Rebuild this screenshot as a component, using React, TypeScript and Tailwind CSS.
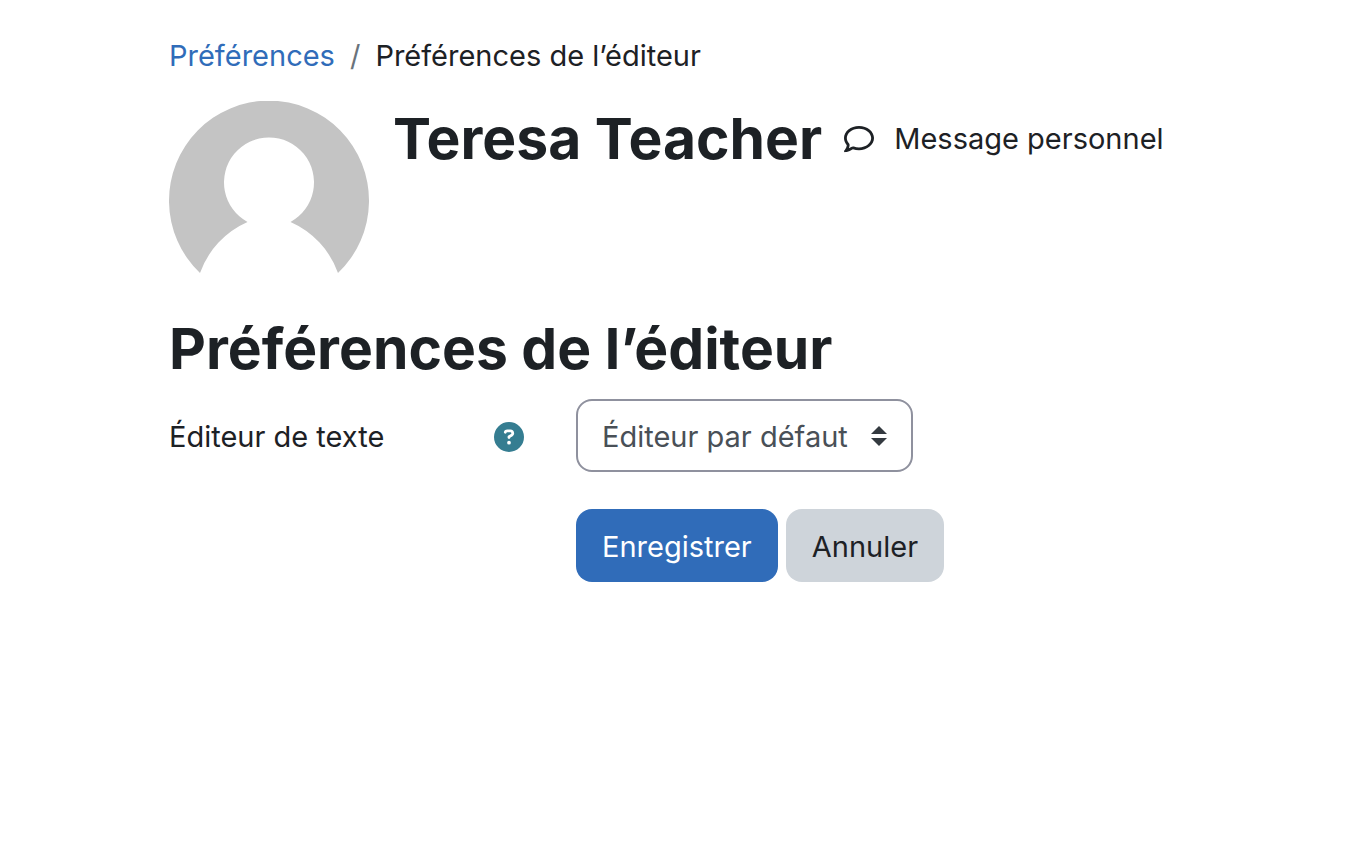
import { FaCircleQuestion, FaRegComment } from 'react-icons/fa6'

function Avatar() {
  return (
    <svg viewBox="0 0 200 200" className="size-50 shrink-0" role="img" aria-label="Teresa Teacher">
      <path
        d="M31 172A100 100 0 1 1 169 172A88 88 0 0 0 121.5 121A45 45 0 1 0 78.5 121A88 88 0 0 0 31 172Z"
        fill="#c4c4c4"
      />
    </svg>
  )
}

export default function App() {
  return (
    <main className="min-h-screen bg-white px-[169px] pt-9 font-['Inter',sans-serif] text-[29px] leading-10 text-[#1d2125]">
      <nav aria-label="Fil d’Ariane">
        <ol className="flex gap-[15px]">
          <li>
            <a href="#preferences" className="text-[#306cb9]">Préférences</a>
          </li>
          <li aria-hidden="true" className="text-[#6a737b]">/</li>
          <li aria-current="page">Préférences de l’éditeur</li>
        </ol>
      </nav>

      <header className="mt-[25px] flex gap-6">
        <Avatar />
        <div className="flex h-[76px] items-center gap-[22px]">
          <h1 className="text-[57px] leading-[72px] font-bold whitespace-nowrap">Teresa Teacher</h1>
          <a href="#message" className="flex items-center gap-5 whitespace-nowrap">
            <FaRegComment className="size-[30px]" />
            Message personnel
          </a>
        </div>
      </header>

      <h2 className="mt-3 text-[57px] leading-[72px] font-bold">Préférences de l’éditeur</h2>

      <form className="mt-[14px] grid grid-cols-[355px_1fr] gap-x-[52px] gap-y-[37px]">
        <div className="flex items-center justify-between pt-0.5">
          <label htmlFor="editor">Éditeur de texte</label>
          <button type="button" aria-label="Aide" className="text-[#357d91]">
            <FaCircleQuestion className="size-[30px]" />
          </button>
        </div>
        <div className="relative w-fit">
          <select
            id="editor"
            className="block h-[73px] w-[337px] appearance-none rounded-2xl border-2 border-[#8f919e] bg-white px-6 pt-0.5 text-[#495057]"
          >
            <option>Éditeur par défaut</option>
          </select>
          <svg viewBox="0 0 16 20" className="pointer-events-none absolute top-[27px] right-[26px] h-5 w-4" fill="#343a40">
            <path d="M8 0L16 8H0ZM0 12H16L8 20Z" />
          </svg>
        </div>
        <div className="col-start-2 flex gap-2">
          <button type="submit" className="h-[73px] rounded-2xl bg-[#306cb9] px-[26px] pt-0.5 text-white">Enregistrer</button>
          <button type="button" className="h-[73px] rounded-2xl bg-[#ced4da] px-[26px] pt-0.5">Annuler</button>
        </div>
      </form>
    </main>
  )
}
